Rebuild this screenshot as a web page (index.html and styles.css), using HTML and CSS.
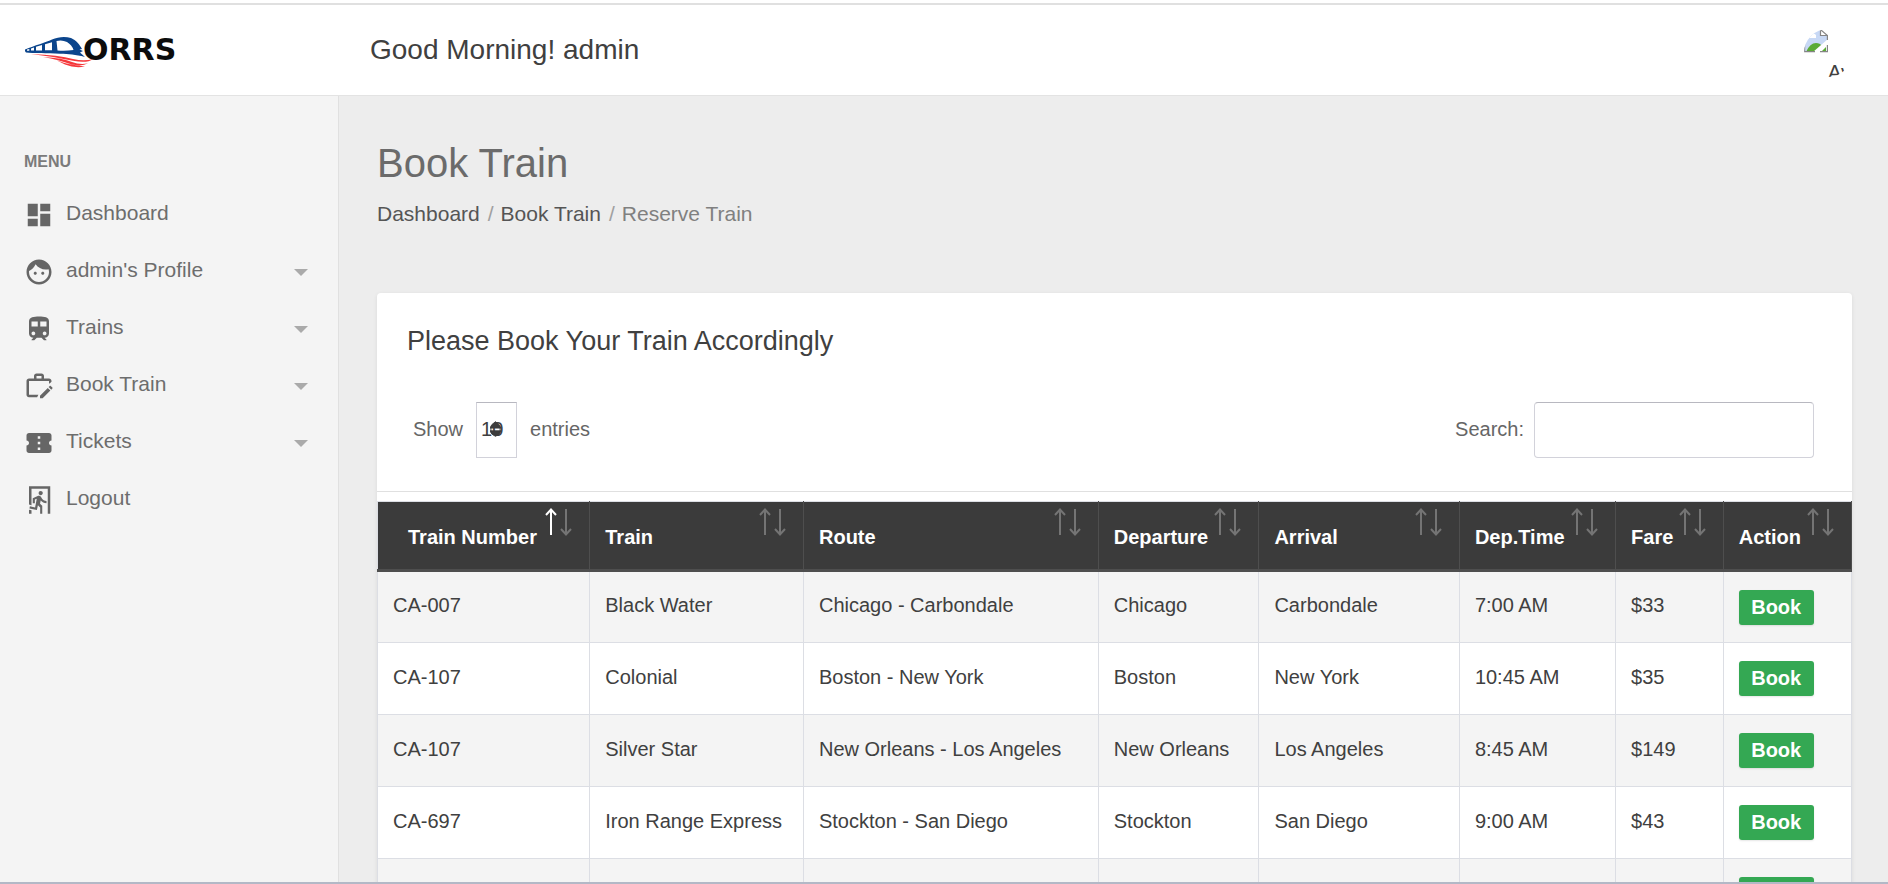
FILE: index.html
```html
<!DOCTYPE html>
<html lang="en">
<head>
<meta charset="utf-8">
<title>Book Train</title>
<link rel="stylesheet" href="styles.css">
</head>
<body>
<div class="app">
  <header class="topbar">
    <a class="logo" href="#" aria-label="ORRS home">
      <svg class="logo-mark" viewBox="0 0 70 32" aria-hidden="true">
        <path fill="#0b458c" d="M0 13.500C10 9.500 20 6.500 27 3.500C33 0.800 40 0 46 2C51 4 55 9 57 13L54.500 13.500L58 15L55 16.500L60 21C50 18.500 44 18 35 17.800C22 17 8 17.500 1 16.500Q-0.500 15 0 13.500Z"/>
        <path fill="#fff" d="M31.500 5Q37 3.500 42 6Q47 9 48.500 14Q40 15.300 32.500 14.500ZM20 8.200L27 6.200V14.300H20ZM11 10.800L17 9V14.500H11ZM6 12.500L9 11.400V14.500H6ZM2 13.600L4.300 12.900V14.700H2Z"/>
        <path fill="#f5383b" d="M6 18Q34 19 48 23Q58 25.500 68 23.300Q62 27.500 48 24.800Q28 20.500 6 18ZM18 21Q38 22 47 26Q55 29 63 27.300Q57 31 46 28.300Q34 24 18 21ZM32 24.500Q44 29 60 30.500Q50 32.500 40 28.500Z"/>
      </svg>
      <span class="logo-text">ORRS</span>
    </a>
    <div class="greeting">Good Morning! admin</div>
    <a class="avatar" href="#" aria-label="Account">
      <svg class="avatar-icon" viewBox="0 0 24 24" aria-hidden="true">
        <path fill="#c7d8f5" d="M0 0H16L23 7V12L11 23H0Z"/>
        <path fill="#fff" d="M2 9Q4 6 7 7Q9 3 12 6V9Z"/>
        <path fill="#5aab35" d="M2 23Q6 14 12 14Q16 14 18 17L11 23Z"/>
        <path fill="#fff" d="M24 10V15L15 23H9Z"/>
        <path fill="#5aab35" d="M17 23L22 18V23Z"/>
        <path fill="#fff" stroke="#858585" stroke-width="1.200" d="M16.500 0.600V6.500H23.400Z"/>
        <path fill="none" stroke="#858585" stroke-width="1.200" d="M23.400 6V11M0.600 0V22.600H11M16 22.600H23.400V16"/>
      </svg>
      <span class="avatar-alt">Av</span>
    </a>
  </header>

  <div class="body">
    <nav class="sidebar" aria-label="Main">
      <h2 class="menu-title">MENU</h2>
      <ul class="menu">
        <li><a class="menu-item" href="#"><svg class="menu-icon" viewBox="0 0 24 24"><path d="M3 13h8V3H3v10zm0 8h8v-6H3v6zm10 0h8V11h-8v10zm0-18v6h8V3h-8z"/></svg><span class="menu-label">Dashboard</span></a></li>
        <li><a class="menu-item" href="#"><svg class="menu-icon" viewBox="0 0 24 24"><path d="M9 11.750c-.69 0-1.250.56-1.250 1.250s.56 1.250 1.250 1.250 1.250-.56 1.250-1.250-.56-1.250-1.250-1.250zm6 0c-.69 0-1.250.56-1.250 1.250s.56 1.250 1.250 1.250 1.250-.56 1.250-1.250-.56-1.250-1.250-1.250zM12 2C6.480 2 2 6.480 2 12s4.480 10 10 10 10-4.480 10-10S17.520 2 12 2zm0 18c-4.410 0-8-3.590-8-8 0-.29.02-.58.05-.86 2.360-1.050 4.230-2.980 5.210-5.370C11.070 8.330 14.050 10 17.420 10c.78 0 1.530-.09 2.250-.26.21.71.33 1.470.33 2.260 0 4.410-3.590 8-8 8z"/></svg><span class="menu-label">admin's Profile</span><i class="caret"></i></a></li>
        <li><a class="menu-item" href="#"><svg class="menu-icon" viewBox="0 0 24 24"><path d="M12 2c-4 0-8 .5-8 4v9.500C4 17.430 5.570 19 7.500 19L6 20.500v.5h2.230l2-2H14l2 2h2v-.5L16.500 19c1.930 0 3.500-1.570 3.500-3.500V6c0-3.500-3.580-4-8-4zM7.500 17c-.83 0-1.500-.67-1.500-1.500S6.670 14 7.500 14s1.500.67 1.500 1.500S8.330 17 7.500 17zm3.500-7H6V6h5v4zm2 0V6h5v4h-5zm3.500 7c-.83 0-1.500-.67-1.500-1.500s.67-1.500 1.500-1.500 1.500.67 1.500 1.500-.67 1.500-1.500 1.500z"/></svg><span class="menu-label">Trains</span><i class="caret"></i></a></li>
        <li><a class="menu-item" href="#"><svg class="menu-icon" viewBox="0 0 24 24"><path fill-rule="evenodd" d="M8 6V4c0-1.100.9-2 2-2h4c1.100 0 2 .9 2 2v2h4c1.100 0 2 .7 2 2v.5L20.500 10H20V8H4v11h7.500l-1 2H4c-1.100 0-2-.9-2-2V8c0-1.100.9-2 2-2h4zm2 0h4V4h-4v2z"/><path d="M12.800 19.700l6.200-6.200 2.100 2.100-6.200 6.200h-2.100v-2.100zM19.700 12.800l.9-.9c.2-.2.600-.2.800 0l1.300 1.300c.2.200.2.600 0 .8l-.9.900z"/></svg><span class="menu-label">Book Train</span><i class="caret"></i></a></li>
        <li><a class="menu-item" href="#"><svg class="menu-icon" viewBox="0 0 24 24"><path d="M22 10V6c0-1.110-.9-2-2-2H4c-1.100 0-1.990.89-1.990 2v4c1.100 0 1.990.9 1.990 2s-.89 2-2 2v4c0 1.100.9 2 2 2h16c1.100 0 2-.9 2-2v-4c-1.100 0-2-.9-2-2s.9-2 2-2zm-9 7.500h-2v-2h2v2zm0-4.500h-2v-2h2v2zm0-4.500h-2v-2h2v2z"/></svg><span class="menu-label">Tickets</span><i class="caret"></i></a></li>
        <li><a class="menu-item" href="#"><svg class="menu-icon" viewBox="0 0 24 24"><path d="M13.340 8.170C12.410 8.170 11.650 7.400 11.650 6.470A1.690 1.690 0 0 1 13.340 4.780C14.280 4.780 15.040 5.540 15.040 6.470C15.040 7.400 14.280 8.170 13.340 8.170M10.300 19.930L4.370 18.750L4.710 17.050L8.860 17.900L10.210 11.040L8.690 11.640V14.500H7V10.540L11.400 8.670L12.070 8.590C12.670 8.590 13.170 8.930 13.500 9.440L14.360 10.790C15.040 12 16.390 12.820 18 12.820V14.500C16.140 14.500 14.440 13.670 13.340 12.400L12.840 14.940L14.610 16.630V23H12.920V17.900L11.140 16.210L10.300 19.930M21 23H19V3H6V16.110L4 15.690V1H21V23M6 23H4V19.780L6 20.200V23Z"/></svg><span class="menu-label">Logout</span></a></li>
      </ul>
    </nav>

    <main class="content">
      <h1 class="page-title">Book Train</h1>
      <nav aria-label="Breadcrumb">
        <ol class="breadcrumb">
          <li><a href="#">Dashboard</a></li>
          <li><a href="#">Book Train</a></li>
          <li aria-current="page">Reserve Train</li>
        </ol>
      </nav>

      <section class="card">
        <h2 class="card-title">Please Book Your Train Accordingly</h2>
        <div class="controls">
          <label class="length" for="length"><span class="control-text">Show</span>
            <span class="select-wrap">
              <select id="length"><option>10</option><option>25</option><option>50</option></select>
              <svg class="sorter" viewBox="0 0 12 16" aria-hidden="true"><path d="M0 7Q1 3 6 0Q11 3 12 7ZM0 10H12Q11 14 6 16Q1 14 0 10Z"/><path d="M1 6V11M11 6V11"/></svg>
            </span>
            <span class="control-text">entries</span></label>
          <label class="search" for="search"><span class="control-text">Search:</span> <input id="search" type="search"></label>
        </div>
        <table class="trains">
          <colgroup>
            <col class="col-number"><col class="col-train"><col class="col-route"><col class="col-departure"><col class="col-arrival"><col class="col-time"><col class="col-fare"><col class="col-action">
          </colgroup>
          <thead>
            <tr>
              <th class="first" aria-sort="ascending"><button class="sort asc">Train Number<svg class="arrows" viewBox="0 0 28 28"><path class="up" d="M6 27V1M1 7L6 1.500L11 7"/><path d="M21 1V27M16 21L21 26.500L26 21"/></svg></button></th>
              <th><button class="sort">Train<svg class="arrows" viewBox="0 0 28 28"><path d="M6 27V1M1 7L6 1.500L11 7"/><path d="M21 1V27M16 21L21 26.500L26 21"/></svg></button></th>
              <th><button class="sort">Route<svg class="arrows" viewBox="0 0 28 28"><path d="M6 27V1M1 7L6 1.500L11 7"/><path d="M21 1V27M16 21L21 26.500L26 21"/></svg></button></th>
              <th><button class="sort">Departure<svg class="arrows" viewBox="0 0 28 28"><path d="M6 27V1M1 7L6 1.500L11 7"/><path d="M21 1V27M16 21L21 26.500L26 21"/></svg></button></th>
              <th><button class="sort">Arrival<svg class="arrows" viewBox="0 0 28 28"><path d="M6 27V1M1 7L6 1.500L11 7"/><path d="M21 1V27M16 21L21 26.500L26 21"/></svg></button></th>
              <th><button class="sort">Dep.Time<svg class="arrows" viewBox="0 0 28 28"><path d="M6 27V1M1 7L6 1.500L11 7"/><path d="M21 1V27M16 21L21 26.500L26 21"/></svg></button></th>
              <th><button class="sort">Fare<svg class="arrows" viewBox="0 0 28 28"><path d="M6 27V1M1 7L6 1.500L11 7"/><path d="M21 1V27M16 21L21 26.500L26 21"/></svg></button></th>
              <th><button class="sort">Action<svg class="arrows" viewBox="0 0 28 28"><path d="M6 27V1M1 7L6 1.500L11 7"/><path d="M21 1V27M16 21L21 26.500L26 21"/></svg></button></th>
            </tr>
          </thead>
          <tbody>
            <tr><td>CA-007</td><td>Black Water</td><td>Chicago - Carbondale</td><td>Chicago</td><td>Carbondale</td><td>7:00 AM</td><td>$33</td><td class="action"><button class="book">Book</button></td></tr>
            <tr><td>CA-107</td><td>Colonial</td><td>Boston - New York</td><td>Boston</td><td>New York</td><td>10:45 AM</td><td>$35</td><td class="action"><button class="book">Book</button></td></tr>
            <tr><td>CA-107</td><td>Silver Star</td><td>New Orleans - Los Angeles</td><td>New Orleans</td><td>Los Angeles</td><td>8:45 AM</td><td>$149</td><td class="action"><button class="book">Book</button></td></tr>
            <tr><td>CA-697</td><td>Iron Range Express</td><td>Stockton - San Diego</td><td>Stockton</td><td>San Diego</td><td>9:00 AM</td><td>$43</td><td class="action"><button class="book">Book</button></td></tr>
            <tr><td></td><td></td><td></td><td></td><td></td><td></td><td></td><td class="action"><button class="book" aria-label="Book"></button></td></tr>
          </tbody>
        </table>
      </section>
    </main>
  </div>
</div>
</body>
</html>
```

FILE: styles.css
```css
*, *::before, *::after { box-sizing: border-box; }

body {
  margin: 0;
  font-family: "Liberation Sans", Arial, sans-serif;
  font-size: 20px;
  line-height: 30px;
  color: #404040;
  background: #fff;
}

h1, h2 { margin: 0; font-weight: 400; }
ul, ol { margin: 0; padding: 0; list-style: none; }
a { color: inherit; text-decoration: none; }
button, input, select { font: inherit; color: inherit; }

.app {
  display: flex;
  flex-direction: column;
  height: 100vh;
  padding-top: 3px;
  border-bottom: 2px solid #b3b8c6;
}

/* Top bar */
.topbar {
  flex: none;
  display: flex;
  align-items: center;
  height: 93px;
  padding-right: 36px;
  border-top: 2px solid #e0e0e0;
  border-bottom: 1px solid #e3e3e3;
}
.logo {
  display: flex;
  align-items: center;
  width: 370px;
  padding-left: 25px;
}
.logo-mark { width: 70px; height: 32px; margin: 4px -12px 0 0; }
.logo-text {
  z-index: 1;
  font-family: "DejaVu Sans", sans-serif;
  font-size: 30px;
  font-weight: 700;
  color: #0c0c0c;
}
.greeting { flex: 1; font-size: 28px; line-height: 40px; }
.avatar {
  display: flex;
  flex-direction: column;
  width: 48px;
  height: 48px;
  margin-top: 6px;
  overflow: hidden;
  border-radius: 50%;
}
.avatar-icon { flex: none; width: 24px; height: 24px; }
.avatar-alt { padding-left: 24px; line-height: 38px; }

/* Sidebar */
.body { flex: 1; display: flex; min-height: 0; }
.sidebar {
  flex: none;
  width: 339px;
  padding-top: 50px;
  background: #f4f4f4;
  border-right: 1px solid #e0e0e0;
}
.menu-title {
  padding-left: 24px;
  font-size: 16px;
  line-height: 32px;
  font-weight: 700;
  color: #7b7b7b;
}
.menu { padding-top: 8px; }
.menu-item {
  display: flex;
  align-items: center;
  height: 57px;
  padding: 0 30px 0 24px;
  font-size: 21px;
  color: #6d6d6d;
}
.menu-label { padding-bottom: 4px; }
.menu-icon { width: 30px; height: 30px; margin-right: 12px; fill: #666; }
.caret {
  margin: 2px 0 0 auto;
  border: 7px solid transparent;
  border-top-color: #aaa;
  border-bottom: 0;
}

/* Content */
.content {
  flex: 1;
  padding: 40px 36px 40px 38px;
  overflow-y: auto;
  scrollbar-width: none;
  background: #ededed;
}
.page-title { font-size: 40px; line-height: 54px; color: #6b6b6b; }
.breadcrumb {
  display: flex;
  padding: 9px 0 64px;
  font-size: 21px;
  color: #808080;
}
.breadcrumb a { color: #555; }
.breadcrumb li + li::before { content: "/"; padding: 0 7px 0 8px; color: #a0a0a0; }

.card {
  background: #fff;
  border-radius: 4px 4px 0 0;
  box-shadow: 0 1px 4px rgba(0, 0, 0, 0.08);
}
.card-title { padding: 28px 30px 0; font-size: 27px; line-height: 40px; }
.controls {
  display: flex;
  justify-content: space-between;
  padding: 41px 38px 33px 36px;
  color: #666;
  border-bottom: 1px solid #e0e0e0;
}
.length, .search { display: flex; align-items: center; }
.length { gap: 13px; }
.search { gap: 10px; }
.control-text { padding-bottom: 3px; }
.select-wrap { position: relative; display: flex; color: #404040; }
.select-wrap select, .search input {
  height: 56px;
  background: #fff;
  border: 1px solid #d2d2da;
  border-top-color: #b8b8c0;
}
.select-wrap select { width: 41px; padding: 0 0 2px 4px; appearance: none; }
.search input { width: 280px; padding: 0 12px; border-radius: 4px; }
.sorter {
  position: absolute;
  left: 14px;
  top: 19px;
  width: 11px;
  height: 16px;
  fill: #3c3c3c;
  stroke: #3c3c3c;
  pointer-events: none;
}

/* Table */
.trains {
  width: 100%;
  margin-top: 9px;
  table-layout: fixed;
  border-collapse: collapse;
  border: 1px solid #dcdee4;
}
.col-number { width: 14.400%; }
.col-train { width: 14.500%; }
.col-route { width: 20%; }
.col-departure { width: 10.900%; }
.col-arrival { width: 13.600%; }
.col-time { width: 10.600%; }
.col-fare { width: 7.300%; }
.col-action { width: 8.700%; }

.trains th {
  padding: 0;
  background: #3b3b3b;
  border-right: 1px solid #4e4e4e;
  border-bottom: 3px solid #4e4e4e;
}
.sort {
  display: flex;
  justify-content: space-between;
  width: 100%;
  height: 67px;
  padding: 0 16px 0 15px;
  line-height: 70px;
  font-weight: 700;
  color: #fff;
  background: none;
  border: 0;
}
.first .sort { padding-left: 30px; }
.arrows {
  flex: none;
  width: 28px;
  height: 28px;
  margin-top: 6px;
  fill: none;
  stroke: #747474;
  stroke-width: 2;
}
.arrows .up { stroke: #fff; }

.trains td {
  height: 72px;
  padding: 0 15px 4px;
  vertical-align: middle;
  border: 1px solid #dcdee4;
}
.trains .action { padding-bottom: 0; }
.trains tbody tr:nth-child(odd) { background: #f4f4f4; }
.book {
  display: block;
  width: 75px;
  height: 35px;
  padding: 0;
  line-height: 35px;
  font-weight: 700;
  color: #fff;
  background: #34a853;
  border: 0;
  border-radius: 3px;
  box-shadow: 0 1px 2px rgba(0, 0, 0, 0.1);
}
```
